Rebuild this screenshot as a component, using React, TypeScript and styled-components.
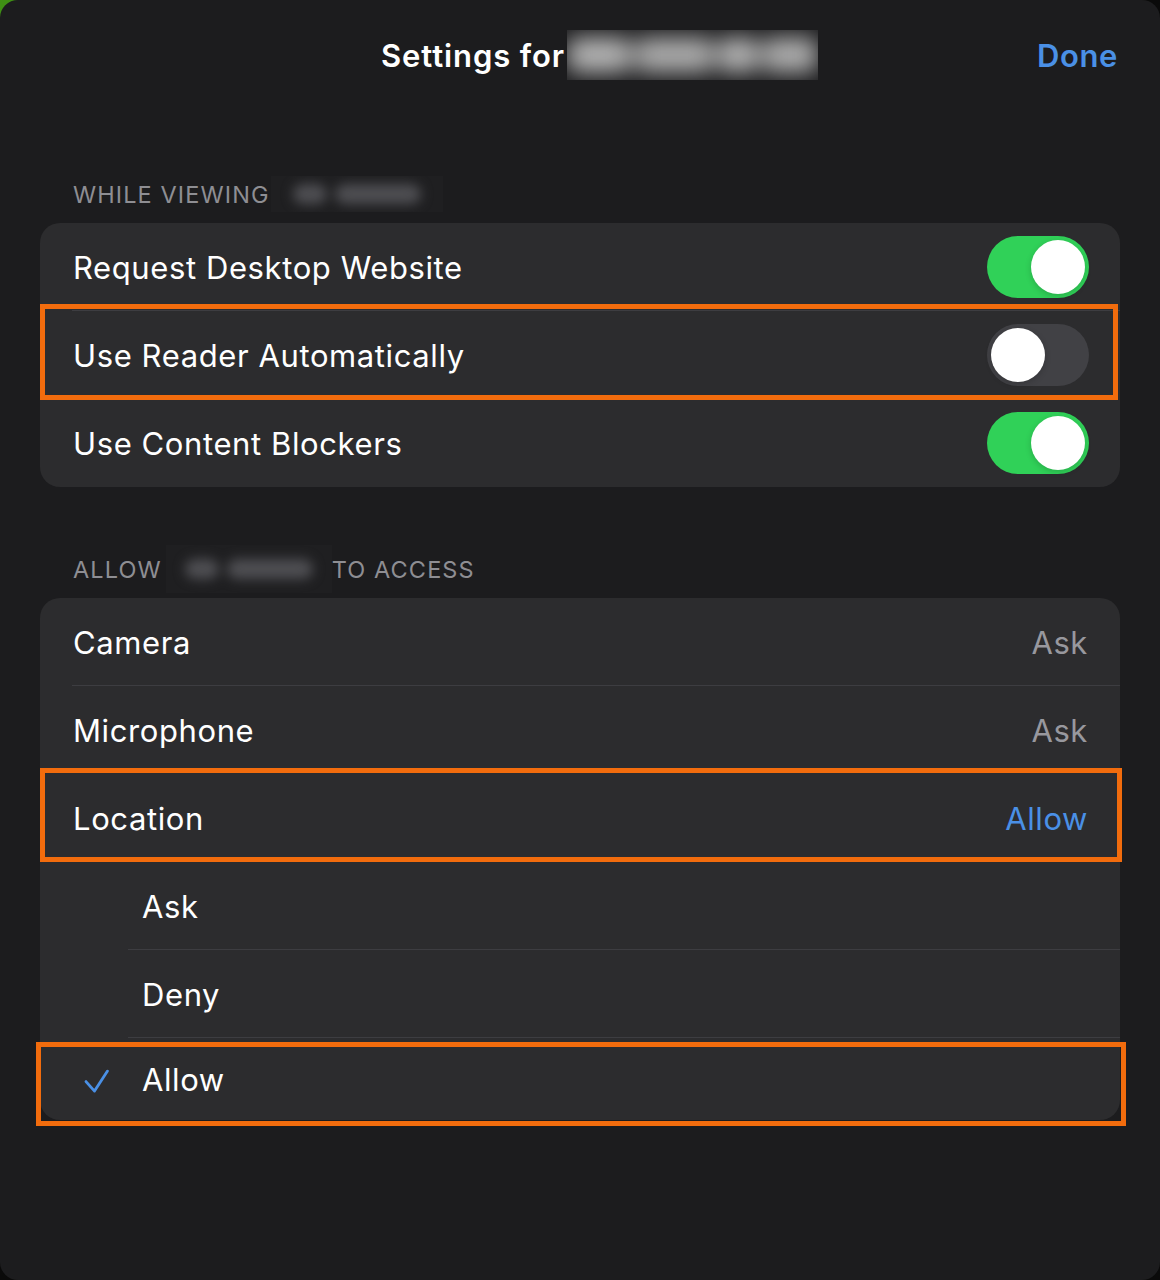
import React from "react";
import styled, { createGlobalStyle } from "styled-components";

const GlobalStyle = createGlobalStyle`
  html, body { margin: 0; padding: 0; background: #0a0a0a; }
  body { font-family: Inter, "Noto Sans", "Liberation Sans", sans-serif; -webkit-font-smoothing: antialiased; }
  * { box-sizing: border-box; }
`;

const Backdrop = styled.div`
  width: 1160px;
  height: 1280px;
  background: radial-gradient(circle at 0 0, #3f8f14 0 15px, #0a0a0a 22px);
`;

const Sheet = styled.div`
  width: 1160px;
  height: 1280px;
  background: #1c1c1e;
  border-radius: 18px;
  display: flex;
  flex-direction: column;
`;

const TopBar = styled.header`
  height: 112px;
  display: flex;
  align-items: center;
  padding: 0 42px 2px 381px;
`;

const Title = styled.h1`
  flex: 1;
  margin: 0;
  font-size: 31px;
  font-weight: 600;
  color: #ffffff;
  display: flex;
  align-items: center;
  letter-spacing: 0.9px;
`;

const DoneButton = styled.button`
  background: none;
  border: none;
  padding: 0;
  font-family: inherit;
  font-size: 31px;
  font-weight: 600;
  color: #4a90e6;
  letter-spacing: 0.6px;
`;

const Redacted = styled.span<{ $w: number; $h: number; $box: string; $gap?: number }>`
  display: inline-block;
  width: ${(p) => p.$w}px;
  height: ${(p) => p.$h}px;
  margin: 0 0 0 ${(p) => p.$gap ?? 0}px;
  background: ${(p) => p.$box};
  overflow: hidden;
  position: relative;
  vertical-align: middle;
  flex-shrink: 0;
`;

const RedactedInk = styled.span<{ $blur: number; $gap?: number }>`
  position: absolute;
  inset: 0;
  display: flex;
  align-items: center;
  justify-content: center;
  gap: ${(p) => p.$gap ?? 8}px;
  filter: blur(${(p) => p.$blur}px);
`;

const Blob = styled.span<{ $w: number; $h: number; $tone: string }>`
  display: inline-block;
  width: ${(p) => p.$w}px;
  height: ${(p) => p.$h}px;
  border-radius: 10px;
  background: ${(p) => p.$tone};
`;

const Content = styled.main`
  display: flex;
  flex-direction: column;
  padding: 67px 40px 0 40px;
  gap: 67px;
`;

const Section = styled.section`
  display: flex;
  flex-direction: column;
`;

const SectionHeader = styled.div`
  height: 30px;
  margin: 0 0 14px 33px;
  display: flex;
  align-items: center;
  font-size: 23.5px;
  font-weight: 400;
  color: #8e8e93;
  letter-spacing: 1.1px;
  white-space: pre;
`;

const Group = styled.div`
  background: #2c2c2e;
  border-radius: 20px;
  display: flex;
  flex-direction: column;
`;

const Row = styled.div<{ $height?: number; $indent?: number; $divider?: boolean }>`
  position: relative;
  height: ${(p) => p.$height ?? 88}px;
  display: flex;
  align-items: center;
  padding: 0 32px 0 ${(p) => p.$indent ?? 33}px;
  &::after {
    content: "";
    display: ${(p) => (p.$divider ? "block" : "none")};
    position: absolute;
    left: ${(p) => ((p.$indent ?? 33) > 60 ? 88 : 32)}px;
    right: 0;
    bottom: 0;
    height: 1px;
    background: #3d3d41;
  }
`;

const Label = styled.span`
  flex: 1;
  font-size: 31px;
  color: #ffffff;
  letter-spacing: 0.6px;
`;

const Value = styled.span<{ $active?: boolean }>`
  font-size: 31px;
  color: ${(p) => (p.$active ? "#4a90e6" : "#98989e")};
  letter-spacing: 0.6px;
`;

const Track = styled.span<{ $on: boolean }>`
  width: 102px;
  height: 62px;
  border-radius: 31px;
  background: ${(p) => (p.$on ? "#30d158" : "#414145")};
  display: flex;
  align-items: center;
  justify-content: ${(p) => (p.$on ? "flex-end" : "flex-start")};
  padding: 0 4px;
  margin-right: -1px;
`;

const Knob = styled.span`
  width: 54px;
  height: 54px;
  border-radius: 50%;
  background: #ffffff;
  box-shadow: 0 2px 6px rgba(0, 0, 0, 0.18);
`;

const CheckSlot = styled.span`
  position: absolute;
  left: 44px;
  top: 50%;
  transform: translateY(-40%);
  display: flex;
`;

const Highlight = styled.span<{ $t: number; $r: number; $b: number; $l: number }>`
  position: absolute;
  top: ${(p) => p.$t}px;
  right: ${(p) => p.$r}px;
  bottom: ${(p) => p.$b}px;
  left: ${(p) => p.$l}px;
  border: 5px solid #f26c0d;
  pointer-events: none;
  z-index: 1;
`;

const Toggle = ({ on }: { on: boolean }) => (
  <Track $on={on}>
    <Knob />
  </Track>
);

const Check = () => (
  <svg width="26" height="26" viewBox="0 0 26 26" fill="none">
    <polyline
      points="2,13 10.5,22.5 23.5,2.5"
      stroke="#4a90e6"
      strokeWidth="2.8"
      strokeLinecap="round"
      strokeLinejoin="round"
    />
  </svg>
);

const HostBlur = () => (
  <RedactedInk $blur={6}>
    <Blob $w={34} $h={20} $tone="#4e4e52" />
    <Blob $w={86} $h={20} $tone="#4e4e52" />
  </RedactedInk>
);

export default function App() {
  return (
    <>
      <GlobalStyle />
      <Backdrop>
        <Sheet>
          <TopBar>
            <Title>
              Settings for
              <Redacted $w={251} $h={50} $box="#1c1c1e" $gap={2}>
                <RedactedInk $blur={11} $gap={4}>
                  <Blob $w={64} $h={36} $tone="#b2b2b2" />
                  <Blob $w={80} $h={36} $tone="#aaaaaa" />
                  <Blob $w={40} $h={36} $tone="#b2b2b2" />
                  <Blob $w={56} $h={36} $tone="#acacac" />
                </RedactedInk>
              </Redacted>
            </Title>
            <DoneButton>Done</DoneButton>
          </TopBar>
          <Content>
            <Section>
              <SectionHeader>
                WHILE VIEWING
                <Redacted $w={172} $h={36} $box="#1f1f21" $gap={1}>
                  <HostBlur />
                </Redacted>
              </SectionHeader>
              <Group>
                <Row $divider>
                  <Label>Request Desktop Website</Label>
                  <Toggle on />
                </Row>
                <Row>
                  <Label>Use Reader Automatically</Label>
                  <Toggle on={false} />
                  <Highlight $t={-7} $r={2} $b={-1} $l={0} />
                </Row>
                <Row>
                  <Label>Use Content Blockers</Label>
                  <Toggle on />
                </Row>
              </Group>
            </Section>
            <Section>
              <SectionHeader>
                ALLOW
                <Redacted $w={166} $h={48} $box="#1f1f21" $gap={4}>
                  <HostBlur />
                </Redacted>
                TO ACCESS
              </SectionHeader>
              <Group>
                <Row $divider>
                  <Label>Camera</Label>
                  <Value>Ask</Value>
                </Row>
                <Row>
                  <Label>Microphone</Label>
                  <Value>Ask</Value>
                </Row>
                <Row>
                  <Label>Location</Label>
                  <Value $active>Allow</Value>
                  <Highlight $t={-6} $r={-2} $b={0} $l={0} />
                </Row>
                <Row $indent={102} $divider>
                  <Label>Ask</Label>
                </Row>
                <Row $indent={102} $divider>
                  <Label>Deny</Label>
                </Row>
                <Row $indent={102} $height={82}>
                  <CheckSlot>
                    <Check />
                  </CheckSlot>
                  <Label>Allow</Label>
                  <Highlight $t={4} $r={-6} $b={-6} $l={-4} />
                </Row>
              </Group>
            </Section>
          </Content>
        </Sheet>
      </Backdrop>
    </>
  );
}
